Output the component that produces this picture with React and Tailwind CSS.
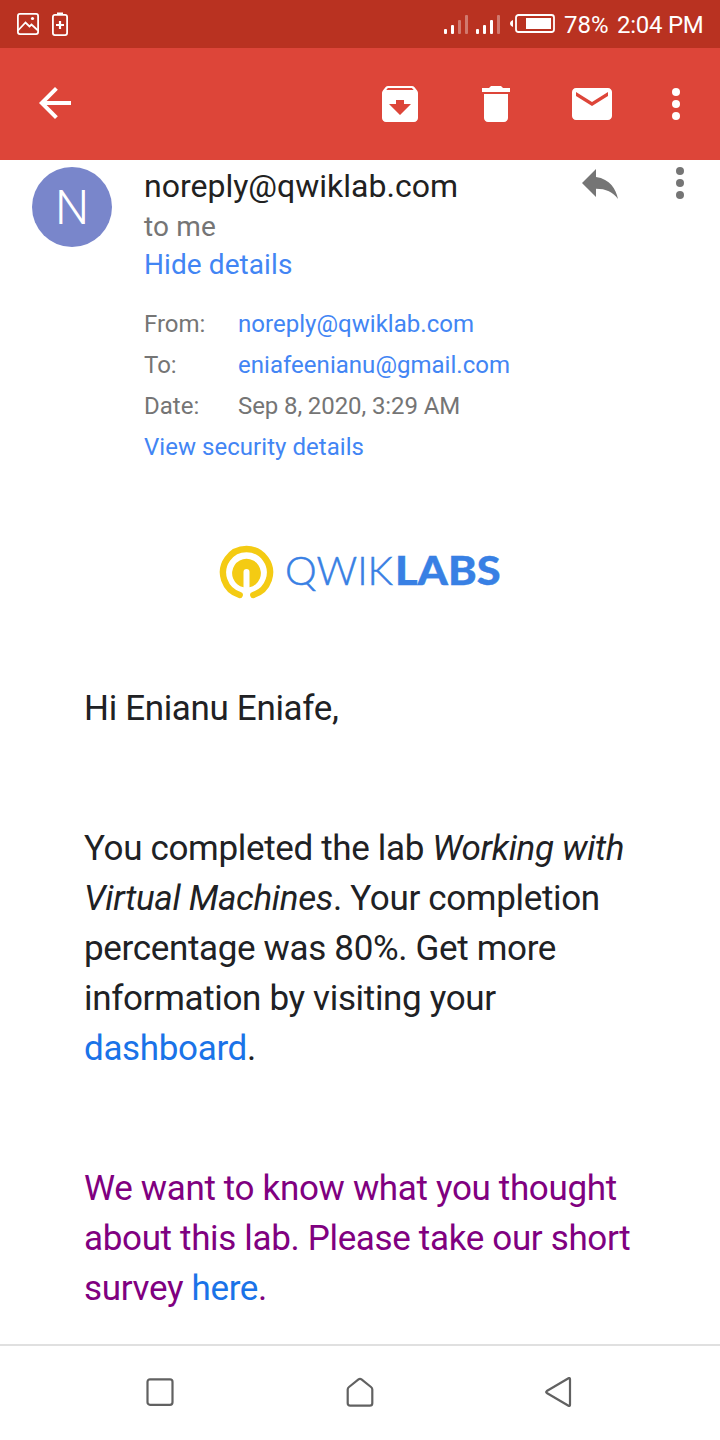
import React from "react";

function Dots({ className }) {
  return (
    <svg className={className} viewBox="0 0 8 32" fill="currentColor">
      <circle cx="4" cy="4" r="4" />
      <circle cx="4" cy="16" r="4" />
      <circle cx="4" cy="28" r="4" />
    </svg>
  );
}

function StatusBar() {
  return (
    <div className="flex h-12 items-center bg-[#b93221] text-white">
      <svg className="ml-[17px] h-[22px] w-[22px]" viewBox="0 0 22 22" fill="none" stroke="currentColor" strokeWidth="1.8">
        <rect x="0.9" y="0.9" width="20.2" height="20.2" rx="2" />
        <path d="M1 17.5L8.5 9.5L12.5 13.5L14.5 11.5L21 17.5" />
        <circle cx="15.5" cy="5.5" r="1.6" fill="currentColor" stroke="none" />
      </svg>
      <svg className="ml-[13px] h-6 w-4" viewBox="0 0 16 24" fill="none" stroke="currentColor" strokeWidth="1.8">
        <rect x="0.9" y="2.9" width="14.2" height="20.2" rx="2" />
        <path d="M5 1.5H11M8 9V17M4 13H12" strokeWidth="2.2" />
      </svg>
      <svg className="ml-auto h-5 w-[112px]" viewBox="0 0 112 20" fill="currentColor">
        <rect x="1" y="15" width="3" height="5" rx="1" />
        <rect x="8" y="11" width="3" height="9" rx="1" />
        <rect x="15" y="6" width="3" height="14" rx="1" opacity="0.35" />
        <rect x="22" y="1" width="3" height="19" rx="1" opacity="0.35" />
        <rect x="33" y="15" width="3" height="5" rx="1" />
        <rect x="40" y="11" width="3" height="9" rx="1" />
        <rect x="47" y="6" width="3" height="14" rx="1" />
        <rect x="54" y="1" width="3" height="19" rx="1" opacity="0.35" />
        <path d="M70 6C68 7 67 8 67 9.5S68 12 70 13Z" />
        <rect x="73" y="1" width="38" height="17" rx="2.5" fill="none" stroke="currentColor" strokeWidth="1.8" />
        <rect x="83" y="4" width="25" height="11" />
      </svg>
      <span className="ml-[9px] w-[44px] pt-[2px] text-[24px] leading-[48px] whitespace-nowrap">78%</span>
      <span className="mr-4 ml-[9px] w-[87px] pt-[2px] text-[24px] leading-[48px] tracking-[-0.25px] whitespace-nowrap">2:04 PM</span>
    </div>
  );
}

function AppBar() {
  return (
    <div className="flex h-28 items-center bg-[#dd4539] text-white">
      <svg className="mb-[2px] ml-[31px] h-12 w-12" viewBox="0 0 24 24" fill="currentColor">
        <path d="M20 11H7.83l5.59-5.59L12 4l-8 8 8 8 1.41-1.41L7.83 13H20v-2z" />
      </svg>
      <svg className="ml-auto h-12 w-12" viewBox="0 0 24 24" fill="currentColor">
        <path fillRule="evenodd" d="M20.54 5.23l-1.39-1.68C18.88 3.21 18.47 3 18 3H6c-.47 0-.88.21-1.16.55L3.46 5.23C3.17 5.57 3 6.02 3 6.5V19c0 1.1.9 2 2 2h14c1.1 0 2-.9 2-2V6.5c0-.48-.17-.93-.46-1.27zM12 17.5L6.5 12H10v-2h4v2h3.5L12 17.5zM5.12 5l.81-1h12l.94 1H5.12z" />
      </svg>
      <svg className="ml-12 h-12 w-12" viewBox="0 0 24 24" fill="currentColor">
        <path d="M6 19c0 1.1.9 2 2 2h8c1.1 0 2-.9 2-2V7H6v12zM19 4h-3.5l-1-1h-5l-1 1H5v2h14V4z" />
      </svg>
      <svg className="ml-12 h-12 w-12" viewBox="0 0 24 24" fill="currentColor">
        <path d="M20 4H4c-1.1 0-1.99.9-1.99 2L2 18c0 1.1.9 2 2 2h16c1.1 0 2-.9 2-2V6c0-1.1-.9-2-2-2zm0 4l-8 5-8-5V6l8 5 8-5v2z" />
      </svg>
      <Dots className="mr-10 ml-14 h-8 w-2" />
    </div>
  );
}

function DetailRow({ label, children, link }) {
  return (
    <div className="flex h-[41px] items-center whitespace-nowrap">
      <span className="w-[94px]">{label}</span>
      <span className={link ? "tracking-[0.03px] text-[#4285f4]" : "tracking-[-0.1px]"}>{children}</span>
    </div>
  );
}

function MessageHeader() {
  return (
    <div className="flex h-[308px] items-start pt-[7px] pl-8">
      <div className="flex h-20 w-20 items-center justify-center rounded-full bg-[#7986cb] pt-[2px] text-[48px] font-light text-white">N</div>
      <div className="ml-8 w-[438px]">
        <div className="h-10 text-[32px] leading-[38px] whitespace-nowrap text-[#212121]">noreply@qwiklab.com</div>
        <div className="h-[38px] text-[28px] leading-[40px] tracking-[0.15px] text-[#757575]">to me</div>
        <div className="h-[38px] text-[28px] leading-[40px] tracking-[0.08px] text-[#4285f4]">Hide details</div>
        <div className="mt-5 text-[24px] text-[#757575]">
          <DetailRow label="From:" link>noreply@qwiklab.com</DetailRow>
          <DetailRow label="To:" link>eniafeenianu@gmail.com</DetailRow>
          <DetailRow label="Date:">Sep 8, 2020, 3:29 AM</DetailRow>
          <div className="flex h-[41px] items-center tracking-[0.04px] text-[#4285f4]">View security details</div>
        </div>
      </div>
      <svg className="mt-[2px] h-[30px] w-9 text-[#757575]" viewBox="3 5 18 15" fill="currentColor">
        <path d="M10 9V5l-7 7 7 7v-4.1c5 0 8.5 1.6 11 5.1-1-5-4-10-11-11z" />
      </svg>
      <Dots className="ml-[58px] h-8 w-2 text-[#757575]" />
    </div>
  );
}

function Logo() {
  return (
    <svg className="mx-auto mt-[77px] h-[56px] w-[284px]" viewBox="0 0 284 56">
      <path d="M21.7 50A23.5 23.5 0 1 1 35.3 50" fill="none" stroke="#f4cb13" strokeWidth="6.4" strokeLinecap="round" />
      <path d="M25.5 42.3A14.4 14.4 0 1 1 31.5 42.3V27a3 3 0 0 0-6 0Z" fill="#f4cb13" />
      <text x="67" y="40" fontFamily="Lato, sans-serif" fontWeight="300" fontSize="39" textLength="108" lengthAdjust="spacingAndGlyphs" fill="#3880e4" stroke="#3880e4" strokeWidth="0.5">QWIK</text>
      <text x="177" y="40" fontFamily="Lato, sans-serif" fontWeight="900" fontSize="39" textLength="105.5" lengthAdjust="spacingAndGlyphs" fill="#3880e4" stroke="#3880e4" strokeWidth="0.4">LABS</text>
    </svg>
  );
}

function NavBar() {
  return (
    <div className="flex h-24 items-center border-t-2 border-[#e0e0e0] text-[#616161]">
      <svg className="ml-[144px] h-8 w-8" viewBox="0 0 32 32" fill="none" stroke="currentColor" strokeWidth="2.2">
        <rect x="3.5" y="2.3" width="25" height="25.5" rx="2.5" />
      </svg>
      <svg className="ml-[168px] h-8 w-8" viewBox="0 0 32 32" fill="none" stroke="currentColor" strokeWidth="2.2" strokeLinejoin="round">
        <path d="M3.7 12.5Q3.7 11 5 10L14.5 2.4Q16 1.3 17.5 2.4L27 10Q28.3 11 28.3 12.5V26.2Q28.3 28.7 25.8 28.7H6.2Q3.7 28.7 3.7 26.2Z" />
      </svg>
      <svg className="ml-[168px] h-8 w-8" viewBox="0 0 32 32" fill="none" stroke="currentColor" strokeWidth="2.2" strokeLinejoin="round">
        <path d="M2.8 14L24.5 1.2Q26 .5 26 2.2V27.7Q26 29.5 24.5 28.7L2.8 16Q1.5 15 2.8 14Z" />
      </svg>
    </div>
  );
}

export default function App() {
  return (
    <div className="flex h-[1440px] w-[720px] flex-col overflow-hidden bg-white font-['Roboto',sans-serif]">
      <StatusBar />
      <AppBar />
      <MessageHeader />
      <Logo />
      <main className="flex grow flex-col gap-[90px] pt-[83px] pl-[84px] text-[35px] leading-[50px] tracking-[-0.34px] whitespace-nowrap text-[#202124]">
        <p>Hi Enianu Eniafe,</p>
        <p>
          You completed the lab <em>Working with</em><br />
          <em>Virtual Machines</em>. Your completion<br />
          percentage was 80%. Get more<br />
          information by visiting your<br />
          <a className="text-[#1a73e8]">dashboard</a>.
        </p>
        <p className="text-[#800080]">
          We want to know what you thought<br />
          about this lab. Please take our short<br />
          survey <a className="text-[#1a73e8]">here</a>.
        </p>
      </main>
      <NavBar />
    </div>
  );
}
